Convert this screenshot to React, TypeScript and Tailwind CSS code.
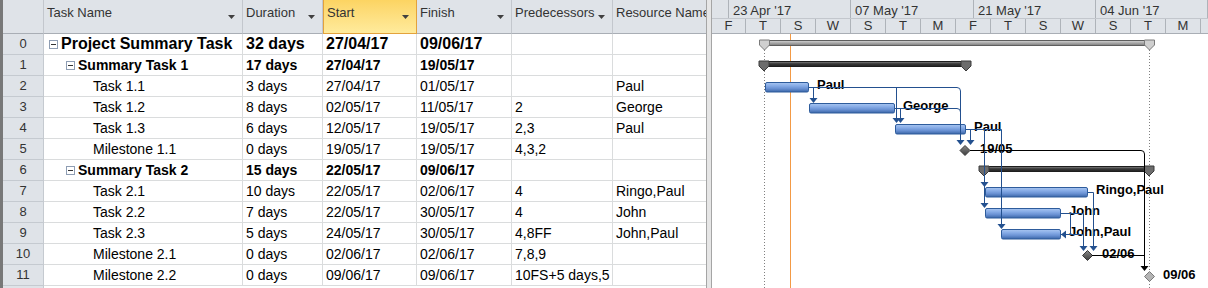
import React from 'react';

interface Row {
  id: number;
  name: string;
  level: number;
  kind: 'project' | 'summary' | 'task';
  duration: string;
  start: string;
  finish: string;
  pred: string;
  res: string;
}

const rows: Row[] = [
  { id: 0, name: 'Project Summary Task', level: 0, kind: 'project', duration: '32 days', start: '27/04/17', finish: '09/06/17', pred: '', res: '' },
  { id: 1, name: 'Summary Task 1', level: 1, kind: 'summary', duration: '17 days', start: '27/04/17', finish: '19/05/17', pred: '', res: '' },
  { id: 2, name: 'Task 1.1', level: 2, kind: 'task', duration: '3 days', start: '27/04/17', finish: '01/05/17', pred: '', res: 'Paul' },
  { id: 3, name: 'Task 1.2', level: 2, kind: 'task', duration: '8 days', start: '02/05/17', finish: '11/05/17', pred: '2', res: 'George' },
  { id: 4, name: 'Task 1.3', level: 2, kind: 'task', duration: '6 days', start: '12/05/17', finish: '19/05/17', pred: '2,3', res: 'Paul' },
  { id: 5, name: 'Milestone 1.1', level: 2, kind: 'task', duration: '0 days', start: '19/05/17', finish: '19/05/17', pred: '4,3,2', res: '' },
  { id: 6, name: 'Summary Task 2', level: 1, kind: 'summary', duration: '15 days', start: '22/05/17', finish: '09/06/17', pred: '', res: '' },
  { id: 7, name: 'Task 2.1', level: 2, kind: 'task', duration: '10 days', start: '22/05/17', finish: '02/06/17', pred: '4', res: 'Ringo,Paul' },
  { id: 8, name: 'Task 2.2', level: 2, kind: 'task', duration: '7 days', start: '22/05/17', finish: '30/05/17', pred: '4', res: 'John' },
  { id: 9, name: 'Task 2.3', level: 2, kind: 'task', duration: '5 days', start: '24/05/17', finish: '30/05/17', pred: '4,8FF', res: 'John,Paul' },
  { id: 10, name: 'Milestone 2.1', level: 2, kind: 'task', duration: '0 days', start: '02/06/17', finish: '02/06/17', pred: '7,8,9', res: '' },
  { id: 11, name: 'Milestone 2.2', level: 2, kind: 'task', duration: '0 days', start: '09/06/17', finish: '09/06/17', pred: '10FS+5 days,5', res: '' },
];

const topScale = [
  { w: 'w-[17px]', label: '' },
  { w: 'w-[122px]', label: "23 Apr '17" },
  { w: 'w-[123px]', label: "07 May '17" },
  { w: 'w-[122px]', label: "21 May '17" },
  { w: 'flex-1', label: "04 Jun '17" },
];

const days = ['F', 'T', 'S', 'W', 'S', 'T', 'M', 'F', 'T', 'S', 'W', 'S', 'T', 'M'];

function SortArrow() {
  return (
    <svg width="7" height="4" viewBox="0 0 7 4" className="shrink-0 mb-[1px]">
      <path d="M0 0H7L3.5 4Z" fill="#404040" />
    </svg>
  );
}

function Collapse() {
  return (
    <span className="w-[9px] h-[9px] border border-[#8e9db3] bg-white flex items-center justify-center shrink-0">
      <span className="w-[5px] h-px bg-[#333]" />
    </span>
  );
}

function HeaderCell({ label, width, arrow = true, active = false }: { label: string; width: string; arrow?: boolean; active?: boolean }) {
  return (
    <div
      className={`${width} h-[34px] shrink-0 pl-[3px] pr-[7px] pt-[5px] border-b overflow-hidden ${
        active
          ? 'bg-gradient-to-b from-[#fcd462] to-[#ffeb9c] border-x border-[#e3a23c]'
          : 'bg-[#dfe3e8] border-r border-b-[#a9aeb5] border-r-[#c3c7cd]'
      }`}
    >
      <div className="flex h-[15px] items-end justify-between whitespace-nowrap text-[13px] leading-[15px] text-[#333]">
        <span>{label}</span>
        {arrow && <SortArrow />}
      </div>
    </div>
  );
}

function TableRow({ row }: { row: Row }) {
  const text =
    row.kind === 'project'
      ? 'text-[16px] font-bold'
      : row.kind === 'summary'
      ? 'text-[14px] font-bold'
      : 'text-[14px]';
  const cell = `h-[21px] shrink-0 flex items-center border-b border-r border-[#dadcdd] overflow-hidden whitespace-nowrap ${text}`;
  return (
    <div className="flex text-black">
      <div className="w-[41px] h-[21px] shrink-0 flex items-center justify-center bg-[#dfe3e8] border-b border-r border-[#c5cad0] text-[13px] text-[#333]">
        {row.id}
      </div>
      <div
        className={`w-[199px] gap-[3px] ${cell} ${
          row.level === 0 ? 'pl-[5px]' : row.level === 1 ? 'pl-[22px]' : 'pl-[49px]'
        }`}
      >
        {row.kind !== 'task' && <Collapse />}
        <span>{row.name}</span>
      </div>
      <div className={`w-[80px] pl-[3px] ${cell}`}>{row.duration}</div>
      <div className={`w-[94px] pl-[3px] ${cell}`}>{row.start}</div>
      <div className={`w-[95px] pl-[3px] ${cell}`}>{row.finish}</div>
      <div className={`w-[101px] pl-[3px] ${cell}`}>{row.pred}</div>
      <div className={`w-[93px] pl-[3px] h-[21px] shrink-0 flex items-center border-b border-[#dadcdd] overflow-hidden whitespace-nowrap ${text}`}>
        {row.res}
      </div>
    </div>
  );
}

const rt = (i: number) => 34 + 21 * i;

function cap(cx: number, y: number) {
  return `${cx - 5},${y} ${cx + 5},${y} ${cx + 5},${y + 5} ${cx},${y + 10} ${cx - 5},${y + 5}`;
}

function diamond(cx: number, cy: number) {
  return `${cx},${cy - 5} ${cx + 5},${cy} ${cx},${cy + 5} ${cx - 5},${cy}`;
}

function arrowDown(x: number, y: number) {
  return `${x - 4},${y} ${x + 4},${y} ${x},${y + 5}`;
}

function GanttChart() {
  const blue = '#23508f';
  const bars = [
    { i: 2, x1: 765, x2: 809, label: 'Paul' },
    { i: 3, x1: 809, x2: 895, label: 'George' },
    { i: 4, x1: 895, x2: 966, label: 'Paul' },
    { i: 7, x1: 985, x2: 1088, label: 'Ringo,Paul' },
    { i: 8, x1: 985, x2: 1061, label: 'John' },
    { i: 9, x1: 1001, x2: 1061, label: 'John,Paul' },
  ];
  const summaries = [
    { i: 1, x1: 764, x2: 966 },
    { i: 6, x1: 984, x2: 1149 },
  ];
  const label = { fontSize: 13, fontWeight: 700, fill: '#000' };
  return (
    <svg width="496" height="254" viewBox="712 34 496 254" className="block" fontFamily="'Liberation Sans', Arial, sans-serif">
      <defs>
        <linearGradient id="task" x1="0" y1="0" x2="0" y2="1">
          <stop offset="0" stopColor="#a9c6f1" />
          <stop offset="0.35" stopColor="#86abe6" />
          <stop offset="0.65" stopColor="#6890d2" />
          <stop offset="1" stopColor="#3a65a6" />
        </linearGradient>
        <linearGradient id="sum" x1="0" y1="0" x2="0" y2="1">
          <stop offset="0" stopColor="#8c8c8c" />
          <stop offset="0.45" stopColor="#3a3a3a" />
          <stop offset="1" stopColor="#202020" />
        </linearGradient>
        <linearGradient id="proj" x1="0" y1="0" x2="0" y2="1">
          <stop offset="0" stopColor="#d4d4d4" />
          <stop offset="0.5" stopColor="#a8a8a8" />
          <stop offset="1" stopColor="#7c7c7c" />
        </linearGradient>
        <linearGradient id="ms" x1="0" y1="0" x2="0" y2="1">
          <stop offset="0" stopColor="#8a8a8a" />
          <stop offset="1" stopColor="#3c3c3c" />
        </linearGradient>
      </defs>

      <line x1="790.5" y1="34" x2="790.5" y2="288" stroke="#f39a45" strokeWidth="1" />
      <line x1="764.5" y1="50" x2="764.5" y2="288" stroke="#808080" strokeDasharray="1 2" />
      <line x1="1149.5" y1="50" x2="1149.5" y2="288" stroke="#808080" strokeDasharray="1 2" />

      <rect x="764" y={rt(0) + 6.5} width="385" height="5" fill="url(#proj)" stroke="#5e5e5e" />
      <polygon points={cap(764.5, rt(0) + 6)} fill="#cfcfcf" stroke="#7a7a7a" />
      <polygon points={cap(1149.5, rt(0) + 6)} fill="#cfcfcf" stroke="#7a7a7a" />

      {summaries.map((s) => (
        <g key={s.i}>
          <rect x={s.x1} y={rt(s.i) + 6.5} width={s.x2 - s.x1} height="5" fill="url(#sum)" stroke="#1e1e1e" />
          <polygon points={cap(s.x1, rt(s.i) + 6)} fill="#6c6c6c" stroke="#3a3a3a" />
          <polygon points={cap(s.x2, rt(s.i) + 6)} fill="#6c6c6c" stroke="#3a3a3a" />
        </g>
      ))}

      {bars.map((b) => (
        <g key={b.i}>
          <rect x={b.x1 + 0.5} y={rt(b.i) + 6.5} width={b.x2 - b.x1 - 1} height="9.5" rx="1.5" fill="url(#task)" stroke="#2e5c9c" />
          <text x={b.x2 + 8} y={rt(b.i) + 13} {...label}>
            {b.label}
          </text>
        </g>
      ))}

      <polygon points={diamond(965, rt(5) + 11.5)} fill="url(#ms)" stroke="#3a3a3a" />
      <polygon points={diamond(1087.5, rt(10) + 11.5)} fill="url(#ms)" stroke="#3a3a3a" />
      <polygon points={diamond(1149.5, rt(11) + 11.5)} fill="#b4b4b4" stroke="#7a7a7a" />
      <text x="980" y={rt(5) + 14} {...label}>19/05</text>
      <text x="1102" y={rt(10) + 14} {...label}>02/06</text>
      <text x="1163" y={rt(11) + 14} {...label}>09/06</text>

      <g fill="none" stroke={blue} strokeWidth="1">
        <path d="M809 87.5H957Q960.5 87.5 960.5 91V141" />
        <path d="M813.5 87.5V98" />
        <path d="M896.5 87.5V118" />
        <path d="M895 108.5H957Q960.5 108.5 960.5 112" />
        <path d="M900.5 108.5V118" />
        <path d="M966 129.5H1001.5V224" />
        <path d="M970.5 129.5V141" />
        <path d="M984.5 129.5V203" />
        <path d="M1088 192.5H1093.5V246" />
        <path d="M1061 213.5H1083.5V246" />
        <path d="M1070.5 213.5V234.5H1066" />
        <path d="M1061 234.5H1083.5" />
      </g>
      <g fill={blue}>
        <polygon points={arrowDown(813.5, 98)} />
        <polygon points={arrowDown(896.5, 118)} />
        <polygon points={arrowDown(900.5, 118)} />
        <polygon points={arrowDown(960.5, 140)} />
        <polygon points={arrowDown(970.5, 140)} />
        <polygon points={arrowDown(984.5, 182)} />
        <polygon points={arrowDown(984.5, 203)} />
        <polygon points={arrowDown(1001.5, 224)} />
        <polygon points={arrowDown(1083.5, 246)} />
        <polygon points={arrowDown(1093.5, 246)} />
        <polygon points="1066,230.5 1066,238.5 1061,234.5" />
      </g>
      <g fill="none" stroke="#000" strokeWidth="1">
        <path d="M970 150.5H1141Q1144.5 150.5 1144.5 154V266" />
        <path d="M1092 255.5H1144.5" />
      </g>
      <polygon points={arrowDown(1144.5, 266)} fill="#000" />
    </svg>
  );
}

export default function App() {
  return (
    <div className="flex w-[1208px] h-[288px] overflow-hidden bg-white font-['Liberation_Sans',Arial,sans-serif]">
      <div className="w-[3px] shrink-0 bg-[#787878]" />

      <div className="w-[703px] shrink-0 flex flex-col">
        <div className="flex">
          <div className="w-[41px] h-[34px] shrink-0 bg-[#dfe3e8] border-r border-b border-r-[#c3c7cd] border-b-[#a9aeb5]" />
          <HeaderCell label="Task Name" width="w-[199px]" />
          <HeaderCell label="Duration" width="w-[80px]" />
          <HeaderCell label="Start" width="w-[94px]" active />
          <HeaderCell label="Finish" width="w-[95px]" />
          <HeaderCell label="Predecessors" width="w-[101px]" />
          <div className="w-[93px] h-[34px] shrink-0 pl-[3px] pt-[5px] bg-[#dfe3e8] border-b border-[#a9aeb5] overflow-hidden whitespace-nowrap text-[13px] leading-[15px] text-[#333]">
            Resource Names
          </div>
        </div>
        {rows.map((r) => (
          <TableRow key={r.id} row={r} />
        ))}
        <div className="w-[41px] flex-1 bg-[#dfe3e8] border-r border-[#c5cad0]" />
      </div>

      <div className="w-[6px] shrink-0 bg-[#e6e6e6] border-x border-[#a5a5a5]" />

      <div className="flex-1 flex flex-col">
        <div className="flex h-[19px] bg-[#dfe3e8] border-b border-[#c3c7cd] text-[13px] leading-[15px] text-[#333]">
          {topScale.map((c, i) => (
            <div key={i} className={`${c.w} shrink-0 h-full pl-[4px] pt-[3px] whitespace-nowrap border-r border-[#aeb3b9]`}>
              {c.label}
            </div>
          ))}
        </div>
        <div className="flex h-[15px] bg-[#dfe3e8] border-b border-[#a9aeb5] text-[13px] leading-[14px] text-[#333]">
          <div className="w-[34px] shrink-0 text-center border-r border-[#aeb3b9]">F</div>
          {days.slice(1).map((d, i) => (
            <div key={i} className="w-[35px] shrink-0 text-center border-r border-[#aeb3b9]">
              {d}
            </div>
          ))}
          <div className="flex-1" />
        </div>
        <GanttChart />
      </div>
    </div>
  );
}
